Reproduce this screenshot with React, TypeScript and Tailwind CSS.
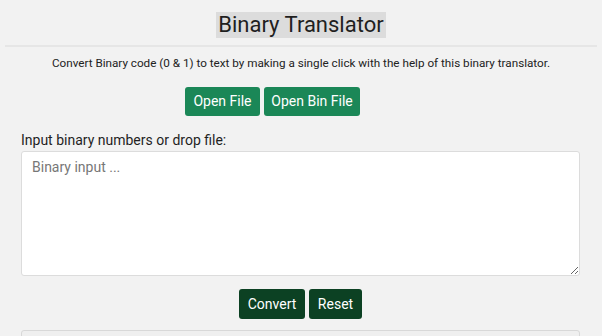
export default function App() {
  return (
    <div className="h-[336px] w-full bg-[#f2f2f2] font-['Roboto',sans-serif] text-[#212529] overflow-hidden">
      <div className="flex justify-center pt-[12px]">
        <h1 className="bg-[#dcdcdc] px-[2px] text-[22px] leading-[26px] h-[26px] font-normal text-[#1f1f1f]">
          Binary Translator
        </h1>
      </div>
      <div className="mx-[5px] mt-[7px] h-[2px] bg-[#e6e6e6]" />
      <p className="mt-[8px] text-center text-[11.7px] leading-[16px] text-[#222]">
        Convert Binary code (0 &amp; 1) to text by making a single click with the help of this binary translator.
      </p>
      <div className="mt-[16px] flex justify-center gap-[4px] pr-[57px]">
        <button className="h-[29px] w-[75px] rounded-[3px] bg-[#1b8757] text-[14px] text-white">Open File</button>
        <button className="h-[29px] w-[96px] rounded-[3px] bg-[#1b8757] text-[14px] text-white">Open Bin File</button>
      </div>
      <div className="mx-[21px] mt-[16px] w-[559px]">
        <label className="block text-[14px] leading-[17px] text-[#1f1f1f]">Input binary numbers or drop file:</label>
        <textarea
          placeholder="Binary input ..."
          className="mt-[2px] block h-[125px] w-full rounded-[3px] border border-[#dcdcdc] bg-white px-[10px] py-[7px] text-[14px] leading-[17px] placeholder:text-[#777] outline-none"
        />
        <div className="mt-[13px] flex justify-center gap-[4px]">
          <button className="h-[30px] w-[66px] rounded-[3px] bg-[#0c4123] text-[14px] text-white">Convert</button>
          <button className="h-[30px] w-[53px] rounded-[3px] bg-[#0c4123] text-[14px] text-white">Reset</button>
        </div>
        <div className="mt-[11px] h-[40px] rounded-[3px] border border-[#d8d8d8] bg-[#efefef]" />
      </div>
    </div>
  );
}
